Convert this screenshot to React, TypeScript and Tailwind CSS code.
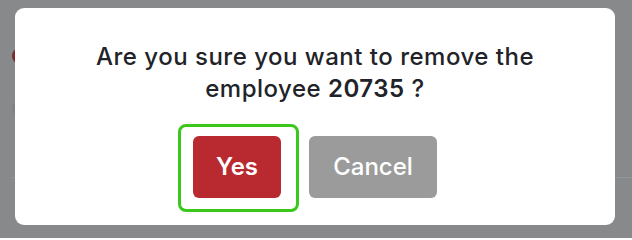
export default function App() {
  return (
    <div
      className="relative h-[238px] w-full overflow-hidden bg-[#88898b]"
      style={{ fontFamily: "Inter, 'Noto Sans', sans-serif" }}
    >
      {/* page behind the overlay */}
      <div className="flex flex-col pt-[48px] pl-[12px]">
        <div className="h-[16px] w-[16px] rounded-full bg-[#7a2a30]" />
        <div className="mt-[36px] h-[18px] w-[18px] rounded-full bg-[#808183]" />
        <div className="mt-[59px] h-px w-full bg-[#8e979c]" />
      </div>

      {/* modal */}
      <div className="absolute inset-0 pt-[8px] pl-[15px]">
        <div className="flex h-[217px] w-[600px] flex-col items-center rounded-[9px] bg-white pt-[33px]">
          <p className="text-center text-[24px] leading-[32px] font-medium tracking-[0.5px] text-[#212328]">
            Are you sure you want to remove the
            <br />
            employee <span className="font-semibold">20735</span> ?
          </p>
          <div className="mt-[31px] flex items-center gap-[28px]">
            <div className="relative">
              <span className="absolute -top-[12px] -right-[18px] -bottom-[14px] -left-[15px] rounded-[8px] border-[3px] border-[#3cc81a]" />
              <button className="relative flex h-[62px] w-[88px] items-center justify-center rounded-[6px] bg-[#b82a30] text-[24px] font-semibold text-white">
                Yes
              </button>
            </div>
            <button className="flex h-[62px] w-[128px] items-center justify-center rounded-[6px] bg-[#9b9b9b] text-[24px] font-medium text-white">
              Cancel
            </button>
          </div>
        </div>
      </div>
    </div>
  );
}
